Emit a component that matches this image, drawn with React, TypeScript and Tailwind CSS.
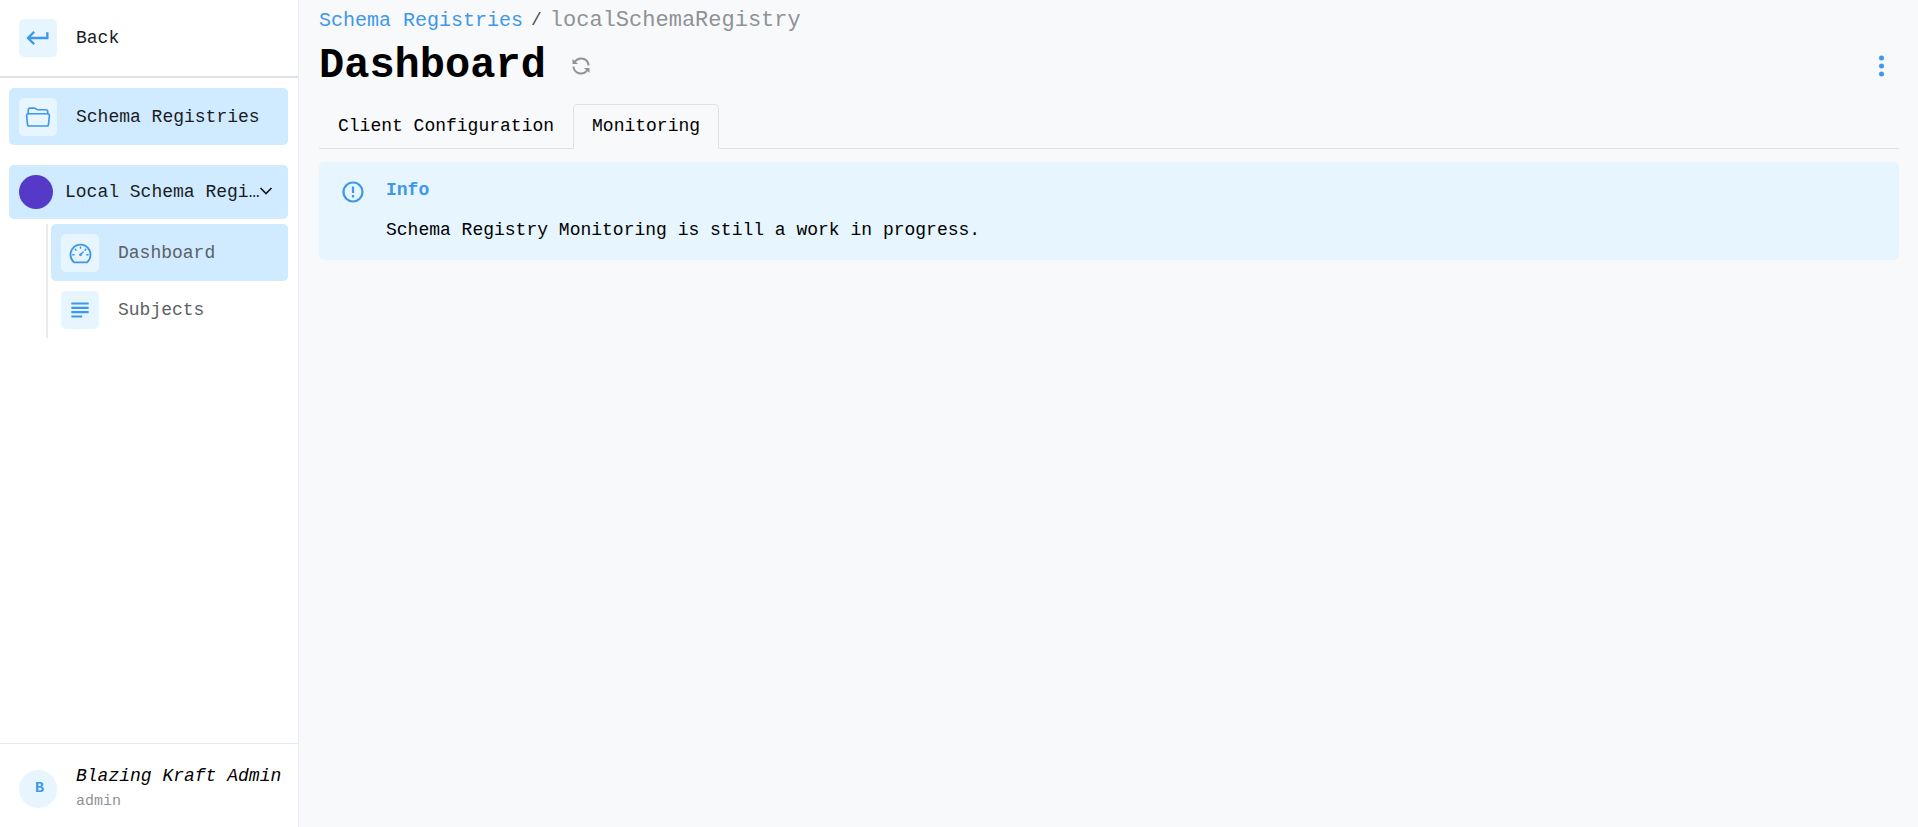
import { useState } from "react";
import type { ReactNode } from "react";
import { AiOutlineDashboard } from "react-icons/ai";
import { IoFolderOpenOutline } from "react-icons/io5";
import { MdKeyboardReturn, MdSubject } from "react-icons/md";

const tabs = ["Client Configuration", "Monitoring"];

function IconTile({ children }: { children: ReactNode }) {
  return (
    <span className="flex size-[38px] shrink-0 items-center justify-center rounded-[5px] bg-[#e7f5ff] text-[#3d98ea]">
      {children}
    </span>
  );
}

function NavLink({
  href,
  label,
  icon,
  active = false,
  nested = false,
}: {
  href: string;
  label: string;
  icon: ReactNode;
  active?: boolean;
  nested?: boolean;
}) {
  return (
    <a
      href={href}
      className={`flex items-center gap-[19px] rounded-[5px] px-[10px] pt-[10px] pb-[9px] ${
        active ? "bg-[#d0ebff]" : ""
      } ${nested ? "text-[#5c5f66]" : "text-[#1a1b1e]"}`}
    >
      <IconTile>{icon}</IconTile>
      {label}
    </a>
  );
}

function RefreshIcon() {
  return (
    <svg viewBox="0 0 18 18" className="size-[18px]" fill="none" stroke="currentColor" strokeWidth="2">
      <path d="M3 4.500A7.500 7.500 0 0 1 16.500 8.500" />
      <path d="M1.500 9.500A7.500 7.500 0 0 0 15 13.500" />
      <path d="M0.500 2v5H6z" fill="currentColor" stroke="none" />
      <path d="M17.500 16v-5H12z" fill="currentColor" stroke="none" />
    </svg>
  );
}

function AlertIcon() {
  return (
    <svg viewBox="0 0 22 22" className="size-[22px] shrink-0" fill="none" stroke="currentColor" strokeWidth="2.200">
      <circle cx="11" cy="11" r="9.500" />
      <path d="M11 5.500v6.500M11 14v2.500" />
    </svg>
  );
}

export default function App() {
  const [tab, setTab] = useState("Monitoring");
  const [open, setOpen] = useState(true);

  return (
    <div className="flex min-h-screen bg-[#f8f9fb] font-['Liberation_Mono',monospace] text-[18px] leading-[27px] text-black">
      <nav className="flex w-[299px] shrink-0 flex-col border-r border-[#e9ecef] bg-white">
        <div className="border-b-2 border-[#dee2e6] px-[9px] pt-[9px] pb-[10px]">
          <NavLink href="#back" label="Back" icon={<MdKeyboardReturn size={28} />} />
        </div>

        <div className="grow pt-[10px] pr-[10px] pl-[9px]">
          <NavLink href="#registries" label="Schema Registries" icon={<IoFolderOpenOutline size={26} />} active />

          <button
            onClick={() => setOpen(!open)}
            aria-expanded={open}
            title="Local Schema Registry"
            className="mt-5 flex w-full items-center rounded-[5px] bg-[#d0ebff] p-[10px] text-left text-[#1a1b1e]"
          >
            <span className="mr-3 size-[34px] shrink-0 rounded-full bg-[#553ac7]" />
            <span className="whitespace-nowrap">Local Schema Regi…</span>
            <svg viewBox="0 0 14 14" className="size-[14px] shrink-0" fill="none" stroke="currentColor" strokeWidth="1.700">
              <path d="M1.500 3L7 8.500l5.500-5.500" />
            </svg>
          </button>

          {open && (
            <div className="mt-[5px] ml-[37px] border-l-2 border-[#e9ecef] pl-[3px]">
              <NavLink href="#dashboard" label="Dashboard" icon={<AiOutlineDashboard size={25} />} active nested />
              <NavLink href="#subjects" label="Subjects" icon={<MdSubject size={26} />} nested />
            </div>
          )}
        </div>

        {/* Signed-in user */}
        <div className="flex items-center gap-[19px] border-t border-[#e9ecef] px-[19px] pt-[19px] pb-[13px]">
          <span className="flex size-[38px] shrink-0 items-center justify-center rounded-full bg-[#e7f5ff] pl-[3px] text-[15px] font-bold text-[#3d98ea]">
            B
          </span>
          <div>
            <div className="whitespace-nowrap italic">Blazing Kraft Admin</div>
            <div className="text-[15px] leading-6 text-[#909296]">admin</div>
          </div>
        </div>
      </nav>

      <main className="min-w-0 flex-1 pr-[19px] pl-5">
        <div className="flex h-10 items-center">
          <a href="#registries" className="text-[20px] text-[#3d98ea]">Schema Registries</a>
          <span className="mx-2 text-[#495057]">/</span>
          <span className="text-[22px] text-[#909296]">localSchemaRegistry</span>
        </div>

        <header className="flex h-[52px] items-center">
          <h1 className="text-[42px] leading-[52px] font-bold">Dashboard</h1>
          <button aria-label="Refresh" className="ml-[22px] p-1 text-[#909296]">
            <RefreshIcon />
          </button>
          <button aria-label="More actions" className="ml-auto p-1 text-[#3d98ea]">
            <svg viewBox="0 0 26 26" className="size-[26px]" fill="currentColor">
              <circle cx="12.500" cy="5" r="2.500" />
              <circle cx="12.500" cy="13" r="2.500" />
              <circle cx="12.500" cy="21" r="2.500" />
            </svg>
          </button>
        </header>

        <div role="tablist" className="mt-3 flex border-b border-[#dee2e6]">
          {tabs.map((t) => (
            <button
              key={t}
              role="tab"
              aria-selected={tab === t}
              onClick={() => setTab(t)}
              className={`-mb-px rounded-t-[5px] border px-[18px] py-2 ${
                tab === t ? "border-[#dee2e6] border-b-[#f8f9fb]" : "border-transparent"
              }`}
            >
              {t}
            </button>
          ))}
        </div>

        {tab === "Monitoring" && (
          <div role="alert" className="mt-[13px] flex gap-[22px] rounded-[5px] bg-[#e7f5ff] pt-[15px] pr-5 pb-4 pl-[23px]">
            <span className="pt-[4px] text-[#3d98ea]">
              <AlertIcon />
            </span>
            <div>
              <div className="font-bold text-[#3d98ea]">Info</div>
              <p className="mt-[13px]">Schema Registry Monitoring is still a work in progress.</p>
            </div>
          </div>
        )}
      </main>
    </div>
  );
}
